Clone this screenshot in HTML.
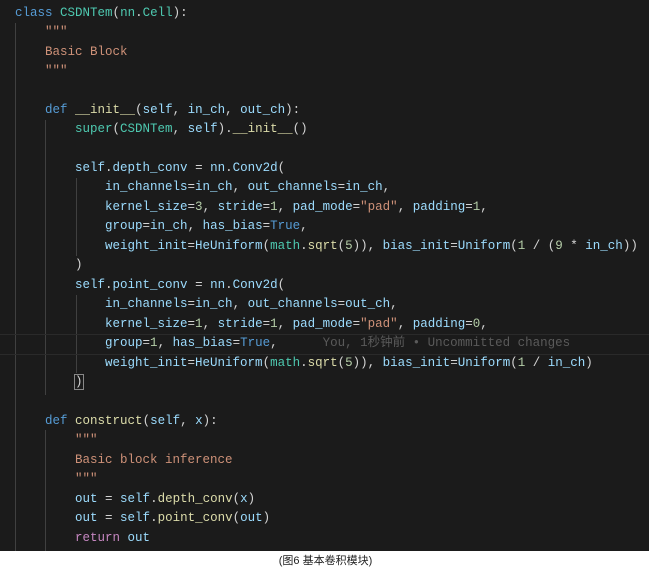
<!DOCTYPE html>
<html><head><meta charset="utf-8"><style>
html,body{margin:0;padding:0;background:#fff;width:651px;height:569px;overflow:hidden}
#ed{position:absolute;left:0;top:0;width:649px;height:551px;background:#1b1b1b}
.l{position:absolute;left:15px;height:19px;line-height:19px;white-space:pre;font-family:"Liberation Mono","Noto Sans CJK SC",monospace;font-size:12.5px;color:#d4d4d4}
.g{position:absolute;width:1px;background:#404040}
.k{color:#569cd6}.c{color:#4ec9b0}.s{color:#ce9178}.p{color:#9cdcfe}.f{color:#dcdcaa}.n{color:#b5cea8}.m{color:#c586c0}
.cap{position:absolute;top:552px;left:0;width:651px;text-align:center;font-family:"Liberation Sans","Noto Sans CJK SC",sans-serif;font-size:11px;color:#222}
</style></head><body>
<div id="ed">
<div class="g" style="left:15px;top:23px;height:528px"></div>
<div class="g" style="left:45px;top:120px;height:275px"></div>
<div class="g" style="left:45px;top:430px;height:121px"></div>
<div class="g" style="left:76px;top:178px;height:78px"></div>
<div class="g" style="left:76px;top:295px;height:78px"></div>
<div style="position:absolute;left:0;top:334px;width:649px;height:19px;border-top:1px solid #2a2a2a;border-bottom:1px solid #2a2a2a"></div>
<div class="l" style="top:4px"><span class="k">class</span> <span class="c">CSDNTem</span>(<span class="c">nn</span>.<span class="c">Cell</span>):</div>
<div class="l s" style="top:23px">    """</div>
<div class="l s" style="top:43px">    Basic Block</div>
<div class="l s" style="top:62px">    """</div>
<div class="l" style="top:101px">    <span class="k">def</span> <span class="f">__init__</span>(<span class="p">self</span>, <span class="p">in_ch</span>, <span class="p">out_ch</span>):</div>
<div class="l" style="top:120px">        <span class="c">super</span>(<span class="c">CSDNTem</span>, <span class="p">self</span>).<span class="f">__init__</span>()</div>
<div class="l" style="top:159px">        <span class="p">self</span>.<span class="p">depth_conv</span> = <span class="p">nn</span>.<span class="p">Conv2d</span>(</div>
<div class="l" style="top:178px">            <span class="p">in_channels</span>=<span class="p">in_ch</span>, <span class="p">out_channels</span>=<span class="p">in_ch</span>,</div>
<div class="l" style="top:198px">            <span class="p">kernel_size</span>=<span class="n">3</span>, <span class="p">stride</span>=<span class="n">1</span>, <span class="p">pad_mode</span>=<span class="s">"pad"</span>, <span class="p">padding</span>=<span class="n">1</span>,</div>
<div class="l" style="top:217px">            <span class="p">group</span>=<span class="p">in_ch</span>, <span class="p">has_bias</span>=<span class="k">True</span>,</div>
<div class="l" style="top:237px">            <span class="p">weight_init</span>=<span class="p">HeUniform</span>(<span class="c">math</span>.<span class="f">sqrt</span>(<span class="n">5</span>)), <span class="p">bias_init</span>=<span class="p">Uniform</span>(<span class="n">1</span> / (<span class="n">9</span> * <span class="p">in_ch</span>))</div>
<div class="l" style="top:256px">        )</div>
<div class="l" style="top:276px">        <span class="p">self</span>.<span class="p">point_conv</span> = <span class="p">nn</span>.<span class="p">Conv2d</span>(</div>
<div class="l" style="top:295px">            <span class="p">in_channels</span>=<span class="p">in_ch</span>, <span class="p">out_channels</span>=<span class="p">out_ch</span>,</div>
<div class="l" style="top:315px">            <span class="p">kernel_size</span>=<span class="n">1</span>, <span class="p">stride</span>=<span class="n">1</span>, <span class="p">pad_mode</span>=<span class="s">"pad"</span>, <span class="p">padding</span>=<span class="n">0</span>,</div>
<div class="l" style="top:334px">            <span class="p">group</span>=<span class="n">1</span>, <span class="p">has_bias</span>=<span class="k">True</span>,      <span style="color:#5a5a5a">You, 1秒钟前 • Uncommitted changes</span></div>
<div class="l" style="top:354px">            <span class="p">weight_init</span>=<span class="p">HeUniform</span>(<span class="c">math</span>.<span class="f">sqrt</span>(<span class="n">5</span>)), <span class="p">bias_init</span>=<span class="p">Uniform</span>(<span class="n">1</span> / <span class="p">in_ch</span>)</div>
<div class="l" style="top:373px">        <span style="outline:1px solid #888">)</span></div>
<div class="l" style="top:412px">    <span class="k">def</span> <span class="f">construct</span>(<span class="p">self</span>, <span class="p">x</span>):</div>
<div class="l s" style="top:431px">        """</div>
<div class="l s" style="top:451px">        Basic block inference</div>
<div class="l s" style="top:470px">        """</div>
<div class="l" style="top:490px">        <span class="p">out</span> = <span class="p">self</span>.<span class="f">depth_conv</span>(<span class="p">x</span>)</div>
<div class="l" style="top:509px">        <span class="p">out</span> = <span class="p">self</span>.<span class="f">point_conv</span>(<span class="p">out</span>)</div>
<div class="l" style="top:529px">        <span class="m">return</span> <span class="p">out</span></div>
</div>
<div class="cap">(图6 基本卷积模块)</div>
</body></html>
